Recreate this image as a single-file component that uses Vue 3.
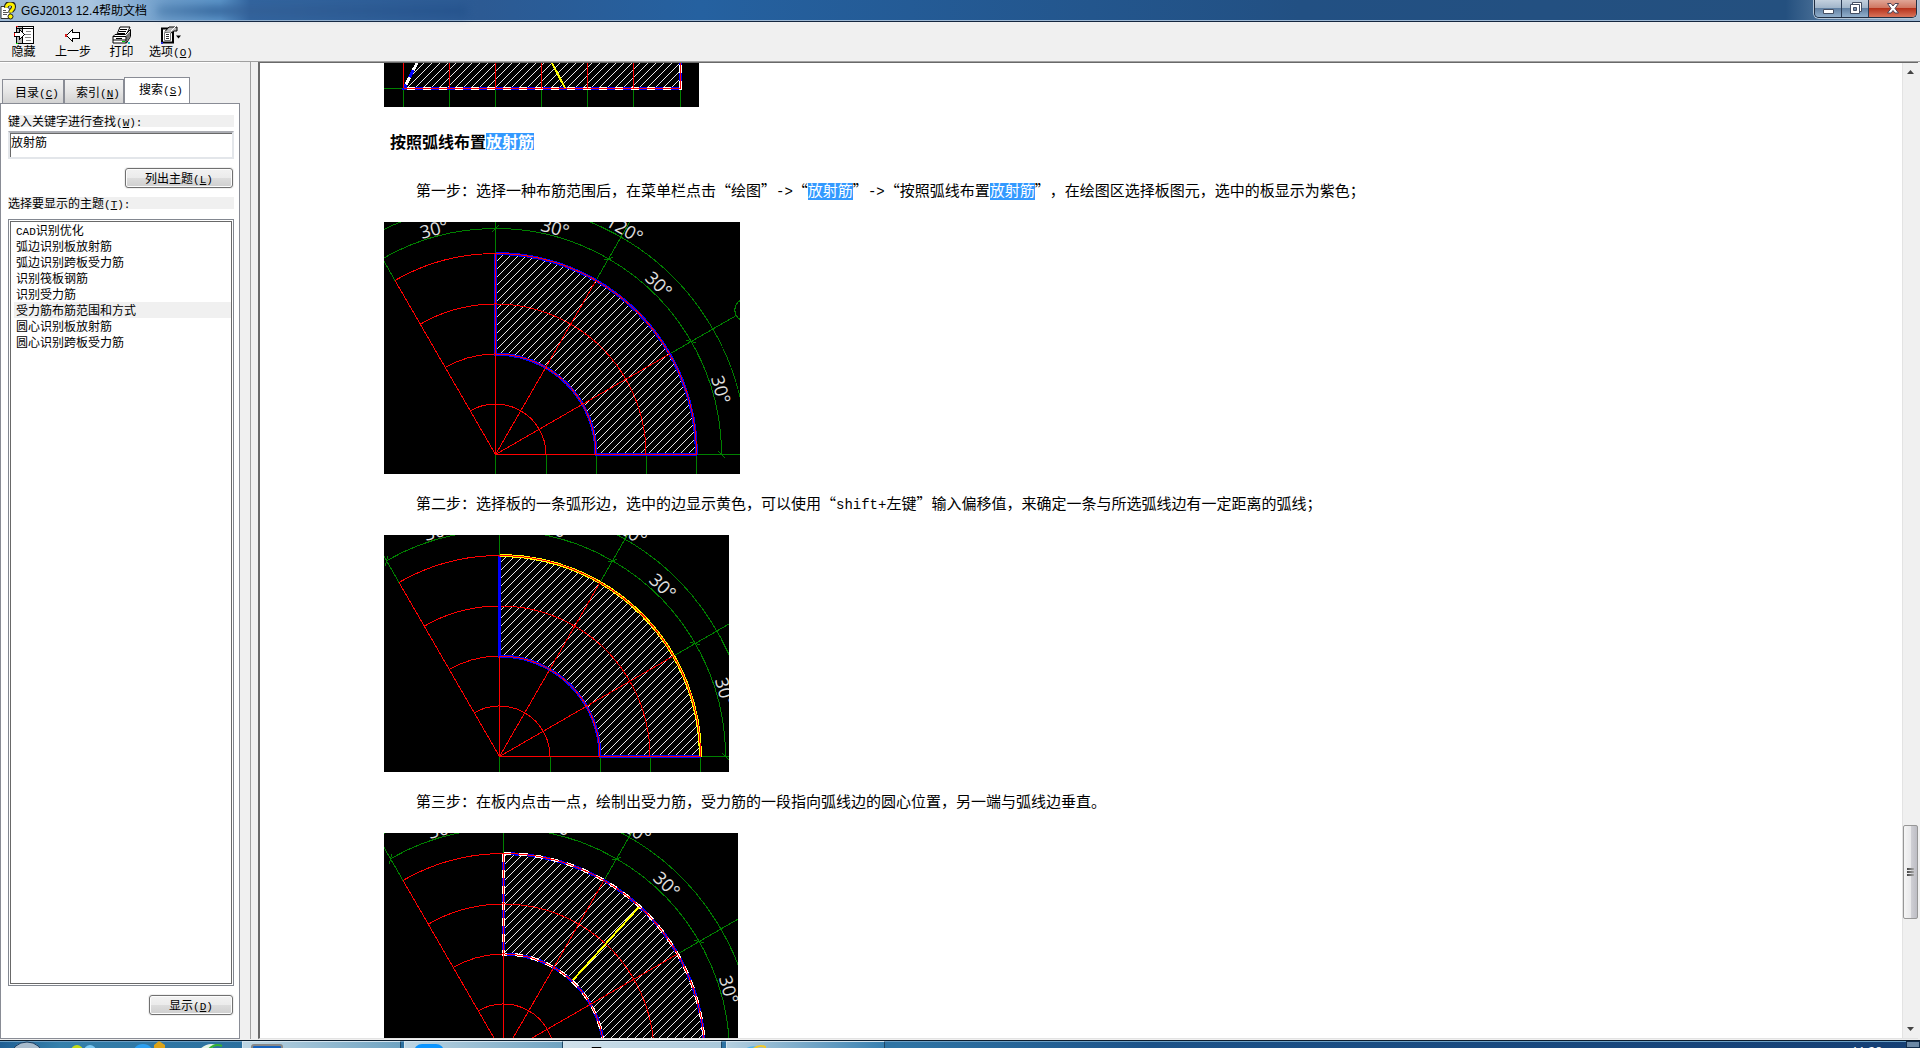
<script setup>
import { ref } from 'vue'

const keyword = ref('放射筋')
const selected = ref(5)
const topics = [
  { latin: 'CAD', text: '识别优化' },
  { text: '弧边识别板放射筋' },
  { text: '弧边识别跨板受力筋' },
  { text: '识别筏板钢筋' },
  { text: '识别受力筋' },
  { text: '受力筋布筋范围和方式' },
  { text: '圆心识别板放射筋' },
  { text: '圆心识别跨板受力筋' },
]

const point = (cx, cy, r, deg) => {
  const a = (deg * Math.PI) / 180
  return [cx + r * Math.cos(a), cy - r * Math.sin(a)]
}
const arc = (cx, cy, r, from, to) => {
  const [x1, y1] = point(cx, cy, r, from)
  const [x2, y2] = point(cx, cy, r, to)
  return `M${x1} ${y1}A${r} ${r} 0 0 ${to > from ? 0 : 1} ${x2} ${y2}`
}
const ray = (cx, cy, r1, r2, deg) => {
  const [x1, y1] = point(cx, cy, r1, deg)
  const [x2, y2] = point(cx, cy, r2, deg)
  return `M${x1} ${y1}L${x2} ${y2}`
}

function buildFan({ width, height, cx, cy, mode, bar }) {
  const angles = [0, 30, 60, 90, 120]
  const radii = [50.5, 100.5, 150.5, 201]
  const green = [
    arc(cx, cy, 226, 0, 120),
    arc(cx, cy, 251, 0, 130),
    ...angles.map((a) => ray(cx, cy, 201, a === 120 ? 250 : 278, a)),
    ...[0, 50.5, 100.5, 150.5, 201].map((d) => `M${cx + d} ${cy}V${height}`),
    ...angles.map((a) => {
      const [x, y] = point(cx, cy, 226, a)
      const [dx, dy] = point(0, 0, 5, a - 45)
      return `M${x - dx} ${y - dy}L${x + dx} ${y + dy}`
    }),
  ].join('')
  const red = [
    ...radii.map((r) => arc(cx, cy, r, 0, 120)),
    ...angles.map((a) => ray(cx, cy, 0, 201, a)),
  ].join('')
  const outer = arc(cx, cy, 201, 90, 0)
  const side = `M${cx} ${cy - 200}V${cy - 100.5}`
  const rest = `M${cx} ${cy - 201}V${cy - 100.5}A100.5 100.5 0 0 1 ${cx + 100.5} ${cy}H${cx + 201}`
  const region = `${outer}H${cx + 100.5}A100.5 100.5 0 0 0 ${cx} ${cy - 100.5}Z`
  const labels = [
    { text: '30°', a: 105, r: 234 },
    { text: '30°', a: 75, r: 235 },
    { text: '120°', a: 60, r: 261 },
    { text: '30°', a: 46, r: 237 },
    { text: '30°', a: 16, r: 236 },
  ].map((l) => {
    const [x, y] = point(cx - 1, cy, l.r, l.a)
    return { text: l.text, x, y, turn: `rotate(${90 - l.a} ${x} ${y})` }
  })
  const [bx, by] = point(cx, cy, 289, 30)
  return { width, height, mode, bar, green, red, outer, side, rest, region, labels, bx, by }
}

const fanOne = buildFan({ width: 356, height: 252, cx: 111.5, cy: 232.5, mode: 'plain' })
const fanTwo = buildFan({ width: 345, height: 237, cx: 115.5, cy: 221.5, mode: 'edge' })
const fanThree = buildFan({
  width: 354, height: 237, cx: 119.5, cy: 221.5, mode: 'dash', bar: 'M255 74L189 147',
})

const steps = [
  {
    parts: [
      { t: '第一步：选择一种布筋范围后，在菜单栏点击“绘图”' }, { t: '->', k: 'latin' },
      { t: '“' }, { t: '放射筋', k: 'hit' }, { t: '”' }, { t: '->', k: 'latin' },
      { t: '“按照弧线布置' }, { t: '放射筋', k: 'hit' },
      { t: '”，在绘图区选择板图元，选中的板显示为紫色；' },
    ],
    fan: fanOne,
  },
  {
    parts: [
      { t: '第二步：选择板的一条弧形边，选中的边显示黄色，可以使用“' }, { t: 'shift+', k: 'latin' },
      { t: '左键”输入偏移值，来确定一条与所选弧线边有一定距离的弧线；' },
    ],
    fan: fanTwo,
  },
  {
    parts: [{ t: '第三步：在板内点击一点，绘制出受力筋，受力筋的一段指向弧线边的圆心位置，另一端与弧线边垂直。' }],
    fan: fanThree,
  },
]
const gridLines = [19.5, 65.5, 111.5, 157.5, 203.5, 249.5, 296.5]
</script>

<template>
  <div class="window">
    <header class="titlebar">
      <svg class="app-icon" width="16" height="18" viewBox="0 0 16 18">
        <path d="M1 4.500h6l3 3v9H1z" fill="#fff" stroke="#333" />
        <path d="M3 8.500h3M3 10.500h5M3 12.500h4" stroke="#555" />
        <path d="M6.500 5.500C6 0 14 0 13.500 5c0 3-3 3-3 5.500" fill="none" stroke="#222" stroke-width="5" />
        <path d="M6.500 5.500C6 1 14 1 13.500 5c0 3-3 3-3 5.500" fill="none" stroke="#fdf100" stroke-width="3" />
        <circle cx="10.500" cy="14.500" r="2.500" fill="#fdf100" stroke="#222" />
      </svg>
      <h1 class="title">GGJ2013 12.4帮助文档</h1>
      <div class="ghost" aria-hidden="true"></div>
      <div class="caption">
        <button class="cap min" aria-label="最小化">
          <svg width="13" height="13" viewBox="0 0 13 13"><path d="M1.500 7.500h10v4h-10z" fill="#fff" stroke="#444f63" /></svg>
        </button>
        <button class="cap max" aria-label="还原">
          <svg width="13" height="13" viewBox="0 0 13 13">
            <path d="M3.500.5h9v9h-9z" fill="#fff" stroke="#444f63" />
            <path d="M1.500 2.500h9v9h-9z" fill="#fff" stroke="#444f63" />
            <path d="M4.500 5.500h3v3h-3z" fill="#7b93b3" stroke="#444f63" />
          </svg>
        </button>
        <button class="cap close" aria-label="关闭">
          <svg width="14" height="13" viewBox="0 0 14 13">
            <path d="M1.500 1.500h3.500L7 4l2-2.500h3.500L9 6.500l3.500 4.500H9L7 8.500 5 11H1.500L5 6.500z" fill="#fff" stroke="#4c4255" />
          </svg>
        </button>
      </div>
    </header>

    <nav class="toolbar">
      <button class="tool t-hide">
        <svg width="20" height="18" viewBox="0 0 20 18" shape-rendering="crispEdges">
          <path d="M2.500.5h17v17h-17z" fill="#fff" stroke="#000" />
          <path d="M3 1h5v16H3z" fill="#bbb" />
          <path d="M3 2.500h16" stroke="#000" />
          <path d="M8.500 1v16" stroke="#000" />
          <path d="M12 5.500h5M11 8.500h6M11 11.500h6M12 14.500h5" stroke="#888" />
          <path d="M.5 6.500h5V3.500l5 5-5 5v-3h-5z" fill="#fff" stroke="#000" />
          <path d="M0 7h1v3H0M2 0h2v1H2" fill="#e00" /><path d="M2 17h2v1H2z" fill="#0d0" />
        </svg>
        <span>隐藏</span>
      </button>
      <button class="tool t-back">
        <svg width="16" height="18" viewBox="0 0 16 18" shape-rendering="crispEdges">
          <path d="M1.500 9.500l6-6v3h7v6h-7v3z" fill="#fff" stroke="#000" />
          <path d="M0 8h2v3H0z" fill="#d22" />
        </svg>
        <span>上一步</span>
      </button>
      <button class="tool t-print">
        <svg width="20" height="18" viewBox="0 0 20 18">
          <path d="M4.500 9.500L8 1h10l-4 8.500z" fill="#fff" stroke="#000" />
          <path d="M8 3.500h7M7 5.500h7M6 7.500h7" stroke="#000" />
          <path d="M1 10.500l2-2h10.500l5-5v7l-4 6.500H1z" fill="#fff" stroke="#000" />
          <path d="M14 9.500l4-4v5l-3.500 6z" fill="#777" />
          <path d="M1 10.500h13V17M1 14h13M4 12.500h6" fill="none" stroke="#000" />
          <path d="M10 15h3v1h-3z" fill="#0c0" /><path d="M16 16h2v2h-2z" fill="#2cc" />
        </svg>
        <span>打印</span>
      </button>
      <button class="tool t-options">
        <svg width="22" height="18" viewBox="0 0 22 18">
          <path d="M2 2.500h11v14h-11z" fill="#fff" stroke="#000" stroke-width="2" />
          <path d="M4.500 6.500h6v8h-6z" fill="#fff" stroke="#777" />
          <path d="M6 8.500h3M6 10.500h3M6 12.500h3" stroke="#333" />
          <path d="M5 5.500L9 1h8v4h-3l-3 2" fill="#bbb" stroke="#000" />
          <path d="M11 5l5-5" stroke="#fff" /><path d="M16 9.500h5l-2.500 3z" fill="#000" />
          <path d="M1 16h2v2H1z" fill="#22d" />
        </svg>
        <span>选项<i class="m">(<u>O</u>)</i></span>
      </button>
    </nav>

    <div class="body">
      <aside class="side">
        <div class="tabs" role="tablist">
          <button class="tab" role="tab">目录<i class="m">(<u>C</u>)</i></button>
          <button class="tab" role="tab">索引<i class="m">(<u>N</u>)</i></button>
          <button class="tab active" role="tab" aria-selected="true">搜索<i class="m">(<u>S</u>)</i></button>
        </div>
        <div class="panel">
          <label class="strip" for="keyword">键入关键字进行查找<i class="m">(<u>W</u>):</i></label>
          <input id="keyword" v-model="keyword" class="field" type="text" />
          <button class="push wide">列出主题<i class="m">(<u>L</u>)</i></button>
          <h2 id="topics-label" class="strip">选择要显示的主题<i class="m">(<u>T</u>):</i></h2>
          <ul class="list" role="listbox" aria-labelledby="topics-label">
            <li
              v-for="(topic, i) in topics" :key="i" role="option" class="topic"
              :class="{ on: i === selected }" :aria-selected="i === selected" @click="selected = i"
            ><i v-if="topic.latin" class="m">{{ topic.latin }}</i>{{ topic.text }}</li>
          </ul>
          <button class="push">显示<i class="m">(<u>D</u>)</i></button>
        </div>
      </aside>
      <div class="splitter"></div>

      <main class="view">
        <article class="doc">
          <svg class="figure" width="315" height="44" viewBox="0 0 315 44" shape-rendering="crispEdges">
            <defs>
              <pattern id="hatch" width="8" height="8" patternUnits="userSpaceOnUse">
                <path d="M-1 9L9 -1M-1 1L1 -1M7 9L9 7" stroke="#e8e8e8" stroke-width="1" />
              </pattern>
            </defs>
            <rect width="315" height="44" fill="#000" />
            <path d="M33 0L20 25H296V0z" fill="url(#hatch)" />
            <path d="M0 25.500H20" stroke="#008000" />
            <path v-for="x in gridLines" :key="x" :d="`M${x} 25V44`" stroke="#008000" />
            <path d="M33 0L20 25.500H296V0" class="blue" />
            <path d="M33 0L20 25.500H296V0" class="dash" />
            <path v-for="x in gridLines" :key="x" :d="`M${x} 0V25`" class="red" />
            <path d="M20 25.500H297" class="red" />
            <path d="M168 0L181 25" class="bar" />
          </svg>

          <h2 class="heading">按照弧线布置<mark>放射筋</mark></h2>

          <template v-for="(step, n) in steps" :key="n">
            <p class="step"><span v-for="(part, k) in step.parts" :key="k" :class="part.k">{{ part.t }}</span></p>
            <svg
              class="figure" :width="step.fan.width" :height="step.fan.height"
              :viewBox="`0 0 ${step.fan.width} ${step.fan.height}`" shape-rendering="crispEdges"
            >
              <rect :width="step.fan.width" :height="step.fan.height" fill="#000" />
              <path :d="step.fan.region" fill="url(#hatch)" />
              <path :d="step.fan.green" class="green" />
              <circle :cx="step.fan.bx" :cy="step.fan.by" r="11" class="green" />
              <path :d="step.fan.rest" class="blue" />
              <path :d="step.fan.outer" :class="step.fan.mode === 'edge' ? 'yellow' : 'blue'" />
              <template v-if="step.fan.mode === 'dash'">
                <path :d="step.fan.rest" class="dash" />
                <path :d="step.fan.outer" class="dash" />
              </template>
              <path :d="step.fan.red" class="red" />
              <path v-if="step.fan.mode === 'edge'" :d="step.fan.side" class="blue" />
              <path v-if="step.fan.bar" :d="step.fan.bar" class="bar" />
              <text
                v-for="(label, k) in step.fan.labels" :key="k" class="angle"
                :x="label.x" :y="label.y" :transform="label.turn"
              >{{ label.text }}</text>
            </svg>
          </template>
        </article>
        <div class="scroll" aria-hidden="true">
          <svg width="7" height="4" viewBox="0 0 7 4"><path d="M0 4l3.500-4L7 4z" fill="#444" /></svg>
          <div class="track"><div class="thumb"><b></b><b></b><b></b></div></div>
          <svg width="7" height="4" viewBox="0 0 7 4"><path d="M0 0l3.500 4L7 0z" fill="#444" /></svg>
        </div>
      </main>
    </div>

    <footer class="taskbar">
      <svg class="quick" width="242" height="7" viewBox="0 0 242 7">
        <ellipse cx="27" cy="15" rx="16" ry="14" fill="#a9bccd" stroke="#163a5e" />
        <circle cx="77" cy="10" r="6" fill="#c5dc15" /><circle cx="90" cy="10" r="6" fill="#7cc8f2" />
        <circle cx="143" cy="14" r="11" fill="#2c9ff0" /><path d="M154 7V4l5-4 6 4v3z" fill="#dca318" />
        <path d="M200 8q8-7 16-4l-6 4z" fill="#e6f5e8" /><path d="M209 8q6-6 13-3" fill="none" stroke="#35b52f" stroke-width="2" />
      </svg>
      <button class="task t-one" aria-label="任务一">
        <svg width="32" height="7" viewBox="0 0 32 7"><rect x="1" y="3" width="30" height="12" rx="2" fill="#1763be" stroke="#888" stroke-width="2" /></svg>
      </button>
      <button class="task t-two" aria-label="任务二">
        <svg width="32" height="7" viewBox="0 0 32 7"><rect x="1" y="2" width="30" height="20" rx="8" fill="#0b95ff" /></svg>
      </button>
      <button class="task t-help" aria-label="帮助文档">
        <svg width="32" height="7" viewBox="0 0 32 7"><path d="M12 8V5.500h9V8" fill="#fdf100" stroke="#000" /></svg>
      </button>
      <button class="task t-web" aria-label="浏览器">
        <svg width="32" height="7" viewBox="0 0 32 7"><path d="M3 8q5-3 10-2" fill="none" stroke="#4fb5ea" stroke-width="3" /><path d="M9 8q7-6 13-3v3" fill="none" stroke="#f3c928" stroke-width="2" /></svg>
      </button>
      <time class="clock">11:28</time>
      <div class="desktop"></div>
    </footer>
  </div>
</template>

<style>
body {
  overflow: hidden;
}
</style>

<style scoped>
* {
  box-sizing: border-box;
}
.window {
  display: flex;
  flex-direction: column;
  height: 100vh;
  background: #f0f0f0;
  color: #000;
  font: 12px/16px "Noto Sans CJK SC", sans-serif;
}
button {
  margin: 0;
  padding: 0;
  font: inherit;
  color: inherit;
}
h1, h2, p, ul {
  margin: 0;
  padding: 0;
  font-weight: normal;
}
svg {
  display: block;
  flex: none;
}
.m {
  font: 11px/11px "Liberation Mono", monospace;
}
.titlebar {
  display: flex;
  flex: none;
  height: 22px;
  background: linear-gradient(90deg, #9db9d4 0, #a8c4df 90px, #6b9bc9 170px, #5b94c8 220px, #32649e 250px, #2c5a93 480px, #2561a0 700px, #225083 1300px, #24507f 93%, #7795b3 97%, #a9bdd2 100%);
  border-bottom: 1px solid #152740;
  box-shadow: inset 0 -1px 0 #9db8d4;
}
.app-icon {
  margin-top: 2px;
}
.title {
  margin-left: 5px;
  font: 12px/23px "Liberation Sans", "Noto Sans CJK SC", sans-serif;
}
.ghost {
  width: 310px;
  height: 10px;
  margin: 6px 0 0 10px;
  background: linear-gradient(90deg, #4b7dad, #26548b 60px, #355f94 80px, #22508a);
  filter: blur(4px);
  opacity: 0.7;
}
.caption {
  display: flex;
  height: 18px;
  margin-left: auto;
  margin-right: 3px;
  border: 1px solid #202e42;
  border-top: 0;
  border-radius: 0 0 5px 5px;
  box-shadow: 0 0 0 1px #b4c6d8;
  overflow: hidden;
}
.cap {
  display: flex;
  width: 27px;
  align-items: center;
  justify-content: center;
  border: 0;
  border-right: 1px solid #2b3c55;
  background: linear-gradient(#c3d0de 0, #a0b4c9 8px, #5f7ea0 8px, #91afcc 100%);
}
.close {
  width: 47px;
  border-right: 0;
  background: linear-gradient(#e0a596 0, #cf7560 8px, #b52f18 8px, #d9735a 100%);
}
.toolbar {
  display: flex;
  flex: none;
  height: 39px;
  padding-left: 11px;
}
.tool {
  display: flex;
  flex-direction: column;
  align-items: center;
  padding-top: 4px;
  border: 0;
  background: none;
  white-space: nowrap;
}
.tool span {
  line-height: 14px;
}
.tool.t-hide { width: 25px; }
.tool.t-back { width: 36px; margin-left: 19px; }
.tool.t-print { width: 25px; margin-left: 18px; }
.tool.t-options { width: 44px; margin-left: 15px; }
.body {
  display: flex;
  flex: 1;
  min-height: 0;
  border-top: 1px solid #a0a0a0;
}
.side {
  display: flex;
  flex: none;
  flex-direction: column;
  width: 240px;
  padding-top: 14px;
  border-top: 1px solid #fff;
}
.tabs {
  display: flex;
  align-items: flex-end;
  height: 27px;
  padding-left: 2px;
  margin-bottom: -1px;
}
.tab {
  width: 62px;
  height: 25px;
  padding-left: 8px;
  border: 1px solid #898c95;
  background: linear-gradient(#f3f3f3, #e6e6e6 50%, #d2d2d2);
}
.tab + .tab {
  width: 60px;
}
.tab.active {
  width: 66px;
  height: 27px;
  padding-bottom: 4px;
  border-bottom: 0;
  background: #fff;
}
.panel {
  display: flex;
  flex: 1;
  flex-direction: column;
  align-items: flex-end;
  padding: 11px 5px 23px 7px;
  border: 1px solid #898c95;
  background: #fff;
}
.strip {
  width: 100%;
  height: 12px;
  background: #f0f0f0;
  font-size: 12px;
  line-height: 12px;
}
.field {
  width: 100%;
  height: 28px;
  margin: 4px 0 9px;
  padding: 0 1px 8px;
  border: 2px solid #e3e6ea;
  border-top-color: #abadb3;
  box-shadow: inset 1px 1px 0 #696969;
  background: #fff;
  font: 12px/14px "Noto Sans CJK SC", sans-serif;
  outline: 0;
}
.push {
  flex: none;
  width: 84px;
  height: 20px;
  margin-right: 1px;
  border: 1px solid #707070;
  border-radius: 3px;
  background: linear-gradient(#f2f2f2, #ebebeb 50%, #dddddd 50%, #cfcfcf);
  box-shadow: inset 0 0 0 1px #fcfcfc, 0 0 0 1px #f0f0f0;
  line-height: 16px;
}
.push.wide {
  width: 108px;
  margin-bottom: 9px;
}
.list {
  flex: 1;
  width: 100%;
  margin: 10px 0 9px;
  padding: 1px 1px 1px 5px;
  list-style: none;
  border: 1px solid #828790;
  outline: 1px solid #696969;
  outline-offset: -3px;
}
.topic {
  height: 16px;
  padding-left: 2px;
}
.topic:first-child {
  margin-top: 1px;
}
.topic.on {
  background: #f0f0f0;
}
.splitter {
  flex: none;
  width: 18px;
  background: linear-gradient(90deg, #f0f0f0 10px, #a0a0a0 10px, #a0a0a0 11px, #f0f0f0 11px);
}
.view {
  display: flex;
  flex: 1;
  min-width: 0;
  margin-right: 2px;
  border: 1px solid #696969;
  border-left-width: 2px;
  border-right: 0;
  border-bottom-color: #e3e3e3;
  background: #fff;
}
.doc {
  display: flex;
  flex: 1;
  flex-direction: column;
  min-width: 0;
  padding-left: 124px;
  overflow: hidden;
  text-spacing-trim: space-all;
}
.figure {
  overflow: hidden;
}
.heading {
  flex: none;
  height: 24px;
  margin: 24px 0 6px;
  padding-left: 6px;
  font-size: 16px;
  font-weight: bold;
  line-height: 21px;
}
.step {
  flex: none;
  height: 21px;
  margin: 20px 0;
  padding-left: 32px;
  font-size: 15px;
  line-height: 17px;
}
.latin {
  font: 14px/14px "Liberation Mono", monospace;
}
mark, .hit {
  display: inline-block;
  height: 17px;
  margin-top: 2px;
  line-height: 17px;
  vertical-align: top;
  background: #3399ff;
  color: #fff;
}
.hit {
  line-height: 13px;
}
.red, .green, .blue, .yellow, .dash, .bar {
  fill: none;
}
.red { stroke: #f00; }
.green { stroke: #008000; }
.blue { stroke: #00f; stroke-width: 3px; }
.yellow { stroke: #ff0; stroke-width: 3px; }
.dash { stroke: #fff; stroke-width: 3px; stroke-dasharray: 8 8; }
.bar { stroke: #ff0; stroke-width: 2px; }
.angle {
  fill: #e0e0e0;
  font: 18px "Open Sans", sans-serif;
  text-anchor: middle;
  dominant-baseline: central;
}
.scroll {
  display: flex;
  flex: none;
  flex-direction: column;
  align-items: center;
  width: 16px;
  padding: 7px 0 7px;
  border-left: 1px solid #e3e3e3;
  background: #f0f0f0;
}
.track {
  display: flex;
  flex: 1;
  flex-direction: column;
  justify-content: flex-end;
  padding-bottom: 108px;
}
.thumb {
  display: flex;
  flex-direction: column;
  align-items: center;
  justify-content: center;
  gap: 1px;
  width: 15px;
  height: 94px;
  border: 1px solid #979797;
  border-radius: 2px;
  background: linear-gradient(90deg, #f5f5f5, #e9e9eb 50%, #d1d1d6 50%, #bdbdc4);
}
.thumb b {
  width: 7px;
  height: 2px;
  background: linear-gradient(90deg, #444, #aaa);
}
.taskbar {
  display: flex;
  flex: none;
  height: 8px;
  margin-top: 1px;
  border-top: 1px solid #0c1c2c;
  background: linear-gradient(90deg, #1f5f94 0, #3580ab 60px, #2b6f9e 240px, #2f74a4 900px, #1c5288 60%, #153f74 100%);
  box-shadow: inset 0 1px 0 #6c9fc4;
  overflow: hidden;
}
.task {
  display: flex;
  align-items: flex-start;
  width: 159px;
  height: 8px;
  padding-left: 8px;
  border: 1px solid #d5e5ef;
  border-bottom: 0;
  border-right-color: #1d4766;
  background: linear-gradient(90deg, #bdd5e3, #6fa3c1);
}
.t-two { margin-left: 3px; }
.t-help { background: linear-gradient(90deg, #d0e1eb, #a9c8da); padding-left: 16px; }
.t-web { margin-left: 4px; background: linear-gradient(90deg, #b5d0e0, #3880b0); padding-left: 16px; }
.clock {
  margin-left: auto;
  margin-right: 24px;
  padding-top: 3px;
  color: #fff;
  font: 12px/16px "Open Sans", sans-serif;
}
.desktop {
  width: 14px;
  border: 1px solid #0f2b4a;
  background: #6b88a5;
}
</style>
